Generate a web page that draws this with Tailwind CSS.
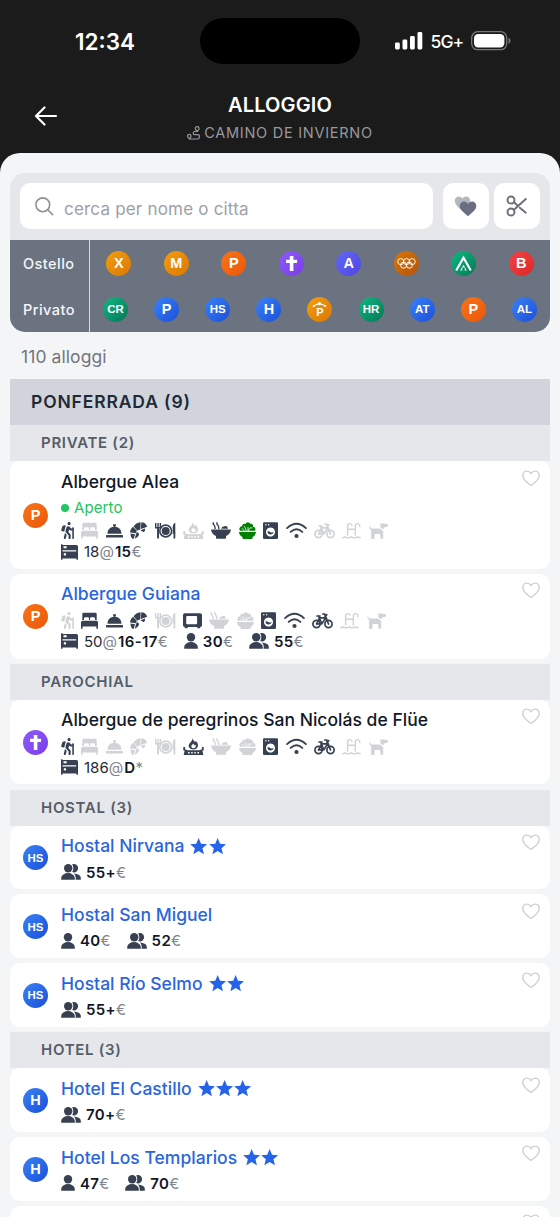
<!DOCTYPE html>
<html lang="it">
<head>
<meta charset="utf-8">
<title>Alloggio</title>
<script src="https://cdn.jsdelivr.net/npm/@tailwindcss/browser@4"></script>
</head>
<body class="bg-[#1b1b1b] font-[Inter,sans-serif] h-[1217px] overflow-hidden">
<svg class="hidden">
  <symbol id="hiker" viewBox="0 0 384 512"><path fill="currentColor" d="M80.95 472.23c-4.28 17.16 6.14 34.53 23.28 38.81 2.61.66 5.22.95 7.8.95 14.33 0 27.37-9.7 31.02-24.23l25.24-100.97-52.78-52.78-34.56 138.22zm14.89-196.12L137 117c2.19-8.42-3.14-16.95-11.92-19.06-43.88-10.52-88.35 15.07-99.32 57.17L.49 253.24c-2.19 8.42 3.14 16.95 11.92 19.06l63.56 15.25c8.79 2.1 17.68-3.02 19.87-11.44zM368 160h-16c-8.84 0-16 7.16-16 16v16h-34.75l-46.78-46.78C243.38 134.11 228.61 128 212.91 128c-27.02 0-50.47 18.3-57.03 44.52l-26.92 107.72a32.012 32.012 0 0 0 8.42 30.39L224 397.25V480c0 17.67 14.33 32 32 32s32-14.33 32-32v-82.75c0-17.09-6.66-33.16-18.75-45.25l-46.82-46.82c.15-.5.49-.89.62-1.41l19.89-79.57 22.43 22.43c6 6 14.14 9.38 22.62 9.38h48v240c0 8.84 7.16 16 16 16h16c8.84 0 16-7.16 16-16V176c.01-8.84-7.15-16-16.01-16zM240 96c26.51 0 48-21.49 48-48S266.51 0 240 0s-48 21.49-48 48 21.49 48 48 48z"/></symbol>
  <symbol id="bed" viewBox="0 0 17 17"><path fill="currentColor" d="M1.300 2Q1.300.7 2.700.7h11.600Q15.700.7 15.700 2V8H14V6.500Q14 5.300 12.700 5.300H10.300Q9 5.300 9 6.500V8H8V6.500Q8 5.300 6.700 5.300H4.300Q3 5.300 3 6.500V8H1.300zM1.500 8.800h14Q17 8.800 17 10.300v6.500h-1.600v-2.300H1.600V16.800H0v-6.500Q0 8.800 1.500 8.800z"/></symbol>
  <symbol id="bell" viewBox="0 0 17 17"><path fill="currentColor" d="M7 2.200h3v1.500H9.300v1.100c3.700.4 6.200 3 6.200 6.900h-14c0-3.900 2.500-6.500 6.200-6.900V3.700H7zM.6 12.900h15.800q.6 0 .6.600v1.400q0 .6-.6.600H.6q-.6 0-.6-.6v-1.400q0-.6.6-.6z"/></symbol>
  <symbol id="croissant" viewBox="0 0 17 17"><g fill="currentColor"><path d="M3.500 4.200Q6 .8 10 .2q.7 0 .7.600l-.5 6.700-3 1z"/><path d="M11.400.2q4 .2 5.500 3.800.3.800-.5 1L13.900 5.900l-3.200 1.200z"/><path d="M3 4.800l3.900 4-1.200 2.500L.6 10.500Q-.2 10.300 .1 9.300 .8 6.300 3 4.800z"/><path d="M.5 11.400l4.600.9-1.500 4.400Q3.100 17.200 2.500 16.800 .3 14.800.5 11.400z"/><path d="M6.900 9.800l2.200 1.900q-.2 3.200-4.400 5.100l1.200-4.300z"/><path d="M10.400 8.200l4.600-1.700q.4 1.900-.7 3.200-.5.500-1 .2z"/></g></symbol>
  <symbol id="plate" viewBox="0 0 21 17"><g fill="none" stroke="currentColor"><circle cx="10.700" cy="9" r="5.900" stroke-width="1.600"/><path stroke-width="1.400" d="M.7 1v4.700h4.700V1M3.050 1v14.500"/><path stroke-width="1.800" stroke-linecap="round" d="M3.050 6.500v9.300M19.400 11v4.800"/></g><circle cx="10.700" cy="9" r="4" fill="currentColor"/><path fill="currentColor" d="M20.300 .7v11h-2.600V5.200Q18 1.500 20.300.7z"/></symbol>
  <symbol id="fire" viewBox="0 0 21 17"><path fill="currentColor" fill-rule="evenodd" d="M9.500 .3Q9.800 2 12 4L13 3Q16 6.300 14.500 9.300 13.200 11.600 10.500 11.600 7.200 11.600 6 9.200 4.900 6.500 8 3.700 9.600 2 9.500.3zM10.300 5.500Q7.700 7.700 8.300 9 9 10.200 10.500 10.200 12.300 10.200 12.700 8.700 13 7.500 12.300 6.600L11.300 7.600z"/><path fill="currentColor" fill-rule="evenodd" d="M.3 9h1.800v2.300l2.500 1h11.800l2.500-1V9h1.800v3.500h-1.300l.9 4.500H.7l.9-4.500H.3zM5 14v1.400h1.600V14zm3.200 0v1.400h1.500V14zm3.100 0v1.400h1.500V14zm3.100 0v1.400H16V14z"/></symbol>
  <symbol id="microwave" viewBox="0 0 19 17"><path fill="currentColor" fill-rule="evenodd" d="M1.800 1.200h15.400q1.800 0 1.800 1.800v10.200q0 1.800-1.800 1.800V16.300h-2.900V15H4.700v1.300H1.800V15Q0 15 0 13.200V3Q0 1.200 1.800 1.200zM4.200 4q-1 0-1 1v6.200q0 1 1 1h8.900q1 0 1-1V5q0-1-1-1z"/></symbol>
  <symbol id="bowl" viewBox="0 0 20 17"><g fill="currentColor"><path d="M0 7.500h20q-.7 4.600-5 6.500v2q0 .7-.7.700H5.700Q5 16.700 5 16v-2Q.7 12.100 0 7.500z"/><path d="M10.300 6.700q.5-2.300 2.500-2.200 1-1 2.300-.4 1.500 0 1.900 2.600z"/></g><path d="M2.300 .8q-.5 1.500.9 2.400.9.800.9 3.200M6 .8q-.5 1.500.9 2.400.9.800.9 3.200" fill="none" stroke="currentColor" stroke-width="1.400" stroke-linecap="round"/></symbol>
  <symbol id="salad" viewBox="0 0 17 17"><path fill="currentColor" d="M0 9.900h17q-.3 3.600-3.500 5.100v1.300q0 .6-.6.600H4.100q-.6 0-.6-.6V15Q.3 13.500 0 9.900zM.9 8.800Q-.2 7 .9 5.500 1.800 4.200 3.100 4.400 3 2.200 5 1.800q.8-.1 1.400.3Q7 .3 8.900.3q1.700.1 2.400 1.500 1.700-.4 2.500 1 .5 1 .1 2Q16 5 16.400 6.700q.2 1.200-.3 2.100z"/><path d="M5.300 8.800 2.900 6.200M7.300 8.800 5.500 4.300M9 8.800V5M9.800 8.800q0-3.500 3.600-2.900" stroke="white" stroke-width=".8" fill="none"/></symbol>
  <symbol id="washer" viewBox="0 0 15 17"><path fill="currentColor" fill-rule="evenodd" d="M1.200.2h12.600q1.200 0 1.200 1.200v14.400q0 1.200-1.200 1.200H1.200Q0 17 0 15.800V1.400Q0 .2 1.200.2zM2.800 2a.7.7 0 1 0 .01 0zm2.900 0a.7.7 0 1 0 .01 0zM7.500 5.500a4.500 4.500 0 1 0 .01 0z"/><path fill="currentColor" d="M4.200 9.600q1.600-1 3.100.3 1.500 1.100 3.500.200a3.400 3.400 0 0 1-6.600-.5z"/></symbol>
  <symbol id="wifi" viewBox="0 0 21 17"><g fill="none" stroke="currentColor" stroke-width="1.900" stroke-linecap="round"><path d="M1.100 6.100q9.400-8.600 18.800 0M4.700 9.900q5.800-5.200 11.600 0"/></g><circle cx="10.500" cy="14" r="2.100" fill="currentColor"/></symbol>
  <symbol id="bike" viewBox="0 0 21 17"><g fill="none" stroke="currentColor" stroke-width="1.700" stroke-linecap="round" stroke-linejoin="round"><circle cx="4.500" cy="12" r="3.600"/><circle cx="16.500" cy="12" r="3.600"/><path d="M4.500 12 7.500 5.800h6.300L9.800 11.800H4.500M9.800 11.800 6.500 4M5 4h3M16.500 12 12.800 2h-2M12.800 4l2-1.300"/></g></symbol>
  <symbol id="pool" viewBox="0 0 19 17"><g fill="none" stroke="currentColor" stroke-width="1.400" stroke-linecap="round"><path d="M5.600 13V4.300Q5.600 1.600 8 1.600q1.500 0 1.900 1.600M13.300 13V4.300q0-2.700 2.500-2.700 1.800 0 2 1.900v1M5.600 7.300h7.700M.8 15.700q1.700 0 2.500-1 1 1.100 3 1.100t3-1.100q1.200 1.100 3.100 1.100t3-1.100q.9 1 2.800 1"/></g></symbol>
  <symbol id="dog" viewBox="0 0 19 17"><path fill="currentColor" d="M.2 4.700q.7-.6 1.200.2.300 1.700 1.700 1.700h7.700l3.400 2.300v7.300q0 .5-.5.500h-2l-.7-4.600H5.500v4.400q0 .5-.5.500H2.600q-.5 0-.5-.5V8Q.4 7 .2 4.700zM11.500 5.400l-.3-3.900q.1-.4.500-.3L13.500 2 15 .9l1 1.100h2.600q.4 0 .4.500v1q-.3 1.700-2 1.800l-1.900.3-1 2z"/></symbol>
  <symbol id="bunk" viewBox="0 0 17 16"><path fill="currentColor" fill-rule="evenodd" d="M0 .3h1.500v.6h14q1.500 0 1.500 1.500v13.300h-1.600v-1.200H1.500v1.200H0zM1.500 6.300v1.300h13.700V6.300zM2.500 2.300v2h3.200v-2zM3.900 9.100a1.250 1.250 0 1 0 .01 0z"/></symbol>
  <symbol id="person" viewBox="0 0 14 16"><circle cx="7" cy="4.200" r="4.200" fill="currentColor"/><path fill="currentColor" d="M.2 15.700v-1.700q0-2.300 2.200-3.600Q4.400 9.100 7 9.100t4.600 1.300q2.200 1.300 2.200 3.600v1.700z"/></symbol>
  <symbol id="people" viewBox="0 0 20 16"><g fill="currentColor"><circle cx="7.200" cy="4.200" r="4.200"/><path d="M.2 15.700v-1.700q0-2.300 2.200-3.600Q4.400 9.100 7 9.100t4.600 1.300q2.200 1.300 2.200 3.600v1.700zM11.200.3q.8-.3 1.700-.3a4.200 4.200 0 0 1 0 8.400q-.9 0-1.700-.3Q12.300 6.200 12.300 4.200T11.200.3zM14.700 15.700v-2.200q0-2.300-1.700-4.100 2.800.2 4.700 1.400 2.100 1.100 2.100 3v1.900z"/></g></symbol>
  <symbol id="star" viewBox="0 0 17 17"><path fill="currentColor" d="M8.500 0l2.400 5.700 6.100.5-4.700 4 1.500 6.100-5.300-3.300-5.300 3.300 1.500-6.100L0 6.200l6.100-.5z"/></symbol>
  <symbol id="heart" viewBox="0 0 20 18"><path fill="none" stroke="currentColor" stroke-width="1.500" stroke-linejoin="round" d="M10 16.400C6.300 13.700 1.300 10.200 1.300 5.700 1.300 3 3.300 1.200 5.700 1.200 7.600 1.200 9.100 2.200 10 3.900 10.900 2.200 12.400 1.200 14.300 1.200c2.400 0 4.400 1.800 4.400 4.500 0 4.500-5 8-8.700 10.700z"/></symbol>
  <symbol id="cross" viewBox="0 0 25 25"><path fill="white" d="M10.800 5h3.600v3.700h3.700v3.300h-3.700v8h-3.600v-8H7.100V8.700h3.700z"/></symbol>
  <symbol id="rings" viewBox="0 0 24 24"><g fill="none" stroke="white" stroke-width=".9"><circle cx="6.500" cy="10.200" r="2.900"/><circle cx="12" cy="10.200" r="2.900"/><circle cx="17.500" cy="10.200" r="2.900"/><circle cx="9.200" cy="13.600" r="2.900"/><circle cx="14.800" cy="13.600" r="2.900"/></g></symbol>
  <symbol id="tent" viewBox="0 0 24 24"><path fill="none" stroke="white" stroke-width="2.100" d="M5 18.700 12 6.500l7 12.200"/><path fill="white" d="M12 13.200l3.200 5.600h-2v-3h-2.400v3H8.800z"/></symbol>
  <symbol id="parador" viewBox="0 0 24 24"><path fill="none" stroke="white" stroke-width="1.100" d="M6.500 9Q9 6.500 12 6.800 15 6.500 17.500 9"/><circle cx="12" cy="6.300" r="1.500" fill="white"/><circle cx="6.400" cy="8.700" r="1" fill="white"/><circle cx="17.600" cy="8.700" r="1" fill="white"/></symbol>
</svg>

<header class="h-[153px]">
  <div class="flex h-[82px] items-center">
    <div class="w-[200px] pt-[1px] pl-[75px] text-[22.500px] font-semibold text-white">12:34</div>
    <div class="h-[46px] w-[160px] rounded-full bg-black"></div>
    <div class="flex items-center pl-[35px] text-white">
      <svg class="h-[18px] w-[28px]" viewBox="0 0 28 18" fill="white"><rect x="0" y="10.500" width="4.800" height="7" rx="1.400"/><rect x="7.500" y="7.500" width="4.800" height="10" rx="1.400"/><rect x="15" y="4" width="4.800" height="13.500" rx="1.400"/><rect x="22.500" y="0" width="4.800" height="17.500" rx="1.400"/></svg>
      <span class="ml-[7.500px] w-[33px] pt-[2px] text-[17.500px] font-medium tracking-[-0.900px] whitespace-nowrap">5G+</span>
      <svg class="ml-[7.500px] h-[20px] w-[41px]" viewBox="0 0 41 20"><rect x=".7" y=".7" width="35" height="18" rx="6" fill="none" stroke="#777" stroke-width="1.300"/><rect x="3" y="3" width="30.400" height="13.400" rx="4.200" fill="white"/><path d="M37.500 6.500q2 1 2 3.200t-2 3.200z" fill="#777"/></svg>
    </div>
  </div>
  <div class="flex h-[71px] items-start">
    <div class="flex w-[160px] pt-[24px] pl-[34px]"><svg class="h-[20px] w-[24px]" viewBox="0 0 24 20" fill="none" stroke="white" stroke-width="2.200" stroke-linecap="round" stroke-linejoin="round"><path d="M22 10H2M10.500 1.500 2 10l8.500 8.500"/></svg></div>
    <div class="w-[240px] text-center">
      <h1 class="mt-[9px] h-[28px] text-[20px] leading-[28px] font-semibold tracking-[0.150px] text-white">ALLOGGIO</h1>
      <div class="flex h-[28px] items-center justify-center gap-[4px] whitespace-nowrap text-[14.500px] tracking-[0.730px] text-[#98999c]">
        <svg class="h-[14px] w-[13px]" viewBox="0 0 13 14" fill="none" stroke="currentColor" stroke-width="1.200"><path d="M10.200.7q1.900 0 1.900 1.800 0 1-1.900 3-1.900-2-1.900-3Q8.300.7 10.200.7zM2.300 8.300q1.700 0 1.700 1.600 0 1-1.700 3-1.700-2-1.700-3 0-1.600 1.700-1.600zM10.200 5.500H7.700q-1.500 0-1.500 1.600t1.500 1.600h3q1.700 0 1.700 2.100t-1.700 2.200H2.300"/></svg>
        <span>CAMINO DE INVIERNO</span>
      </div>
    </div>
  </div>
</header>

<main class="h-[1064px] overflow-hidden rounded-t-[20px] bg-[#f3f5f7] px-[10px] pt-[20px]">
  <section class="overflow-hidden rounded-[15px] bg-[#e5e7eb]">
    <div class="flex h-[67px] px-[10px] pt-[10px]">
      <div class="flex h-[46px] w-[413px] items-center rounded-[10px] bg-white pl-[14px]">
        <svg class="h-[22px] w-[22px]" viewBox="0 0 22 22" fill="none" stroke="#8e9199" stroke-width="1.600" stroke-linecap="round"><circle cx="8.800" cy="9.800" r="6.900"/><path d="m13.800 14.800 4.800 4.800"/></svg>
        <span class="ml-[8px] pt-[7px] text-[17px] tracking-[0.200px] text-[#9da0a7]">cerca per nome o citta</span>
      </div>
      <div class="ml-[10px] flex h-[46px] w-[46px] items-center justify-center rounded-[10px] bg-white">
        <svg class="h-[22px] w-[24px]" viewBox="0 0 24 22"><path fill="#b5b7bf" d="M8.500 16C5 13 .8 9.800.8 5.800.8 3.200 2.600 1.500 4.800 1.500 6.500 1.500 7.800 2.300 8.500 3.800 9.200 2.300 10.500 1.500 12.200 1.500c2.200 0 4 1.700 4 4.300 0 4-4.200 7.200-7.700 10.200z"/><path fill="#6b6e80" d="M14 21.300C10.300 17.900 5.700 15 5.700 11 5.700 8.300 7.600 6.500 10 6.500c1.700 0 3.200.9 4 2.500.8-1.600 2.300-2.500 4-2.500 2.400 0 4.300 1.800 4.300 4.500 0 4-4.600 6.900-8.300 10.300z"/></svg>
      </div>
      <div class="ml-[5px] flex h-[46px] w-[46px] items-center justify-center rounded-[10px] bg-white">
        <svg class="h-[22px] w-[22px]" viewBox="0 0 22 22" fill="none" stroke="#6b6e78" stroke-width="1.900" stroke-linecap="round"><circle cx="5" cy="5" r="3.500"/><circle cx="5" cy="17" r="3.500"/><path d="M8 7.300 11 10M13.800 12.700l6 5M8 14.800 19.800 4"/></svg>
      </div>
    </div>
    <div class="flex h-[92px] bg-[#6b7280]">
      <div class="w-[80px] border-r border-[#d8dbe0] pl-[13px] text-[14.500px] font-medium tracking-[0.450px] text-[#f5f6f8]">
        <div class="flex h-[46px] items-center pt-[1px]">Ostello</div>
        <div class="flex h-[46px] items-center pt-[1px]">Privato</div>
      </div>
      <div class="flex-1">
        <div id="hostels" class="grid h-[46px] grid-cols-8 place-items-center"></div>
        <div id="privates" class="grid h-[46px] grid-cols-9 place-items-center"></div>
      </div>
    </div>
  </section>
  <div class="flex h-[47px] items-center pt-[3px] pl-[11px] text-[17.500px] tracking-[0.080px] text-[#73767c]">110 alloggi</div>
  <h2 class="flex h-[46px] items-center bg-[#d1d5db] pt-[1px] pl-[21px] text-[17.500px] font-semibold tracking-[0.860px] text-[#1f2937]">PONFERRADA (9)</h2>
  <div id="list"></div>
</main>

<script>
const BADGES = {
  orange: 'from-[#f97316] to-[#ea580c]', amber: 'from-[#f59e0b] to-[#d97706]', blue: 'from-[#3b82f6] to-[#1d4ed8]',
  violet: 'from-[#8b5cf6] to-[#7c3aed]', indigo: 'from-[#6366f1] to-[#4f46e5]', green: 'from-[#10b981] to-[#047857]',
  red: 'from-[#ef4444] to-[#dc2626]', brown: 'from-[#d97706] to-[#b45309]'
};
const GLYPHS = ['cross', 'rings', 'tent'];
function badge([text, color]) {
  let inner;
  if (GLYPHS.includes(text)) inner = `<svg class="h-[25px] w-[25px]"><use href="#${text}"/></svg>`;
  else if (text === 'parador') inner = `<svg class="absolute inset-0 h-[25px] w-[25px]"><use href="#parador"/></svg><span class="pt-[7px] text-[11px]">P</span>`;
  else inner = `<span class="${text.length > 1 ? 'pt-[1px] text-[11.500px]' : 'pt-[1px] text-[14.500px]'}">${text}</span>`;
  return `<div class="relative flex h-[25px] w-[25px] shrink-0 items-center justify-center rounded-full bg-linear-to-br font-['Liberation_Sans'] font-bold text-white ${BADGES[color]}">${inner}</div>`;
}
hostels.innerHTML = [['X','amber'],['M','amber'],['P','orange'],['cross','violet'],['A','indigo'],['rings','brown'],['tent','green'],['B','red']].map(badge).join('');
privates.innerHTML = [['CR','green'],['P','blue'],['HS','blue'],['H','blue'],['parador','amber'],['HR','green'],['AT','blue'],['P','orange'],['AL','blue']].map(badge).join('');

const SIZES = {
  hiker: 'w-[13px]', bed: 'w-[17px]', bell: 'w-[17px]', croissant: 'w-[17px]', plate: 'w-[21px]', fire: 'w-[21px]', microwave: 'w-[19px]',
  bowl: 'w-[20px]', salad: 'w-[17px]', washer: 'w-[15px]', wifi: 'w-[21px]', bike: 'w-[21px]', pool: 'w-[19px]', dog: 'w-[19px]',
  bunk: 'w-[17px]', person: 'w-[14px]', people: 'w-[20px]'
};
function services(kitchen, on) {
  return ['hiker','bed','bell','croissant','plate',kitchen,'bowl','salad','washer','wifi','bike','pool','dog'].map(n => {
    const tone = !on.includes(n) ? 'text-[#d1d3d7]' : n === 'salad' ? 'text-[#008000]' : 'text-[#374151]';
    return `<svg class="h-[17px] shrink-0 ${SIZES[n]} ${tone}"><use href="#${n}"/></svg>`;
  }).join('');
}
function price([icon, beds, amount, unit]) {
  return `<div class="flex items-center"><svg class="h-[16px] text-[#374151] ${SIZES[icon]}"><use href="#${icon}"/></svg>
    <span class="${beds ? 'ml-[6px]' : 'ml-[5px]'} text-[15px] leading-[21px] text-[#1f2937]">${beds ? beds + '<span class="tracking-[1px] text-[#80848c]">@</span>' : ''}<b class="font-semibold tracking-[0.350px] text-[#111827]">${amount}</b><span class="text-[#80848c]">${unit}</span></span></div>`;
}
const heart = '<svg class="mt-[1px] mr-[9.500px] ml-auto h-[17px] w-[20px] text-[#cdd0d5]"><use href="#heart"/></svg>';
function card(c) {
  return `<article class="mb-[5.130px] flex items-stretch rounded-[10px] bg-white pt-[7.500px] pb-[6.730px]">
    <div class="flex w-[51px] items-center pl-[13px]">${badge(c.badge)}</div>
    <div class="min-w-0 flex-1">
      <div class="mb-[3px] flex h-[25.500px] items-center pt-[1px] whitespace-nowrap text-[17.500px] font-medium tracking-[0.020px] ${c.link ? 'text-[#2b65dd]' : 'text-[#111827]'}">${c.name}${c.stars ? `<span class="ml-[6px] flex gap-[1px] text-[#2563eb]">${'<svg class="h-[17px] w-[17.300px]"><use href="#star"/></svg>'.repeat(c.stars)}</span>` : ''}</div>
      ${c.open ? '<div class="flex h-[23px] items-center gap-[5px] pb-[1px] text-[15px] tracking-[0.100px] text-[#22c55e]"><span class="h-[8px] w-[8px] rounded-full bg-[#22c55e]"></span>Aperto</div>' : ''}
      ${c.services ? `<div class="flex h-[21px] items-center gap-[7.400px]">${c.services}</div>` : ''}
      <div class="flex h-[21px] items-center gap-[16px]">${c.prices.map(price).join('')}</div>
    </div>
    ${heart}
  </article>`;
}
const group = t => `<h3 class="flex h-[36px] items-center bg-[#e5e7eb] pt-[1px] pl-[31px] text-[15px] font-semibold tracking-[0.700px] text-[#565d69]">${t}</h3>`;
const S = ['HS','blue'], H = ['H','blue'], P = ['P','orange'];
list.innerHTML = [
  group('PRIVATE (2)'),
  card({name:'Albergue Alea', badge:P, open:true, services:services('fire',['hiker','bell','croissant','plate','bowl','salad','washer','wifi']), prices:[['bunk','18','15','€']]}),
  card({name:'Albergue Guiana', link:true, badge:P, services:services('microwave',['bed','bell','croissant','microwave','washer','wifi','bike']), prices:[['bunk','50','16-17','€'],['person','','30','€'],['people','','55','€']]}),
  group('PAROCHIAL'),
  card({name:'Albergue de peregrinos San Nicolás de Flüe', badge:['cross','violet'], services:services('fire',['hiker','fire','washer','wifi','bike']), prices:[['bunk','186','D','*']]}),
  group('HOSTAL (3)'),
  card({name:'Hostal Nirvana', link:true, stars:2, badge:S, prices:[['people','','55+','€']]}),
  card({name:'Hostal San Miguel', link:true, badge:S, prices:[['person','','40','€'],['people','','52','€']]}),
  card({name:'Hostal Río Selmo', link:true, stars:2, badge:S, prices:[['people','','55+','€']]}),
  group('HOTEL (3)'),
  card({name:'Hotel El Castillo', link:true, stars:3, badge:H, prices:[['people','','70+','€']]}),
  card({name:'Hotel Los Templarios', link:true, stars:2, badge:H, prices:[['person','','47','€'],['people','','70','€']]}),
  `<article class="flex h-[64px] rounded-[10px] bg-white pt-[7.500px]">${heart}</article>`
].join('');
</script>
</body>
</html>
